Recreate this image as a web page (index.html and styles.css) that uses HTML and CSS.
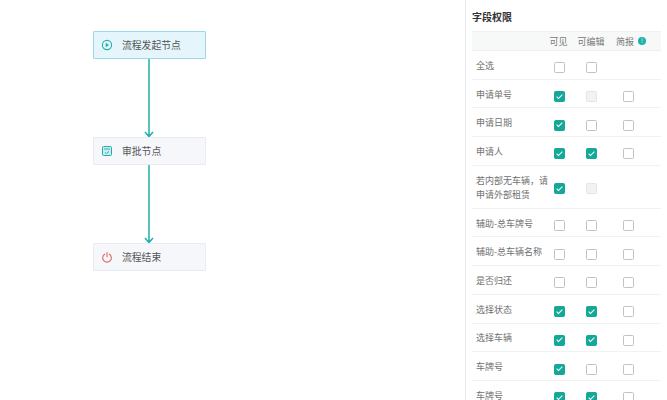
FILE: index.html
```html
<!DOCTYPE html>
<html>
<head>
    <meta charset="UTF-8">
    <title>字段权限</title>
    <link rel="stylesheet" href="styles.css">
</head>
<body>

    <div class="page">
        <div class="canvas">
            <svg class="links" width="465" height="400" viewBox="0 0 465 400">
                <path d="M149 59V136M145 132l4 4.500 4-4.500" />
                <path d="M149 165V242M145 238l4 4.500 4-4.500" />
            </svg>

            <div class="node node-start">
                <svg class="node-icon" width="12" height="12" viewBox="0 0 12 12">
                    <circle cx="6" cy="6" r="4.600" fill="none" stroke="#1fb0a8" stroke-width="1.100" />
                    <path d="M4.700 3.700L8 6L4.700 8.300Z" fill="#1fb0a8" />
                </svg>
                <span>流程发起节点</span>
            </div>

            <div class="node node-approve">
                <svg class="node-icon" width="12" height="12" viewBox="0 0 12 12">
                    <rect x="1.500" y="1.500" width="9" height="9" rx="1" fill="#c9ecec" stroke="#2aa9ad" stroke-width="1" />
                    <path d="M3 4H9M4 7.500L5.500 8.500L8 6.500" fill="none" stroke="#2aa9ad" stroke-width="0.900" />
                </svg>
                <span>审批节点</span>
            </div>

            <div class="node node-end">
                <svg class="node-icon" width="12" height="12" viewBox="0 0 12 12">
                    <path d="M3.700 3.200A4.300 4.300 0 1 0 8.300 3.200M6 1.500V5.800" fill="none" stroke="#dd6b66" stroke-width="1.100" stroke-linecap="round" />
                </svg>
                <span>流程结束</span>
            </div>
        </div>

        <div class="panel">
            <div class="panel-title">字段权限</div>

            <div class="grid-head">
                <span></span>
                <span class="head-cell head-first">可见</span>
                <span class="head-cell">可编辑</span>
                <span class="head-last">简报 <i class="info">!</i></span>
            </div>

            <div class="row">
                <span class="label">全选</span>
                <span class="cell"><i class="box"></i></span>
                <span class="cell"><i class="box"></i></span>
                <span class="cell"></span>
            </div>
            <div class="row">
                <span class="label">申请单号</span>
                <span class="cell"><i class="box on"></i></span>
                <span class="cell"><i class="box off"></i></span>
                <span class="cell"><i class="box"></i></span>
            </div>
            <div class="row">
                <span class="label">申请日期</span>
                <span class="cell"><i class="box on"></i></span>
                <span class="cell"><i class="box"></i></span>
                <span class="cell"><i class="box"></i></span>
            </div>
            <div class="row">
                <span class="label">申请人</span>
                <span class="cell"><i class="box on"></i></span>
                <span class="cell"><i class="box on"></i></span>
                <span class="cell"><i class="box"></i></span>
            </div>
            <div class="row row-tall">
                <span class="label">若内部无车辆&#65292;请申请外部租赁</span>
                <span class="cell"><i class="box on"></i></span>
                <span class="cell"><i class="box off"></i></span>
                <span class="cell"></span>
            </div>
            <div class="row">
                <span class="label">辅助-总车牌号</span>
                <span class="cell"><i class="box"></i></span>
                <span class="cell"><i class="box"></i></span>
                <span class="cell"><i class="box"></i></span>
            </div>
            <div class="row">
                <span class="label">辅助-总车辆名称</span>
                <span class="cell"><i class="box"></i></span>
                <span class="cell"><i class="box"></i></span>
                <span class="cell"><i class="box"></i></span>
            </div>
            <div class="row">
                <span class="label">是否归还</span>
                <span class="cell"><i class="box"></i></span>
                <span class="cell"><i class="box"></i></span>
                <span class="cell"><i class="box"></i></span>
            </div>
            <div class="row">
                <span class="label">选择状态</span>
                <span class="cell"><i class="box on"></i></span>
                <span class="cell"><i class="box on"></i></span>
                <span class="cell"><i class="box"></i></span>
            </div>
            <div class="row">
                <span class="label">选择车辆</span>
                <span class="cell"><i class="box on"></i></span>
                <span class="cell"><i class="box on"></i></span>
                <span class="cell"><i class="box"></i></span>
            </div>
            <div class="row">
                <span class="label">车牌号</span>
                <span class="cell"><i class="box on"></i></span>
                <span class="cell"><i class="box"></i></span>
                <span class="cell"><i class="box"></i></span>
            </div>
            <div class="row">
                <span class="label">车牌号</span>
                <span class="cell"><i class="box on"></i></span>
                <span class="cell"><i class="box on"></i></span>
                <span class="cell"><i class="box"></i></span>
            </div>
        </div>
    </div>

</body>
</html>
```

FILE: styles.css
```css
html, body {
    margin: 0;
    height: 400px;
    overflow: hidden;
    background-color: white;
    font-family: "Noto Sans CJK SC", "Liberation Sans", sans-serif;
    color: #666;
}

.page {
    display: flex;
    height: 400px;
}

/* diagram area, nodes sit on a free canvas */
.canvas {
    position: relative;
    width: 465px;
    flex-shrink: 0;
}

.links {
    position: absolute;
    left: 0;
    top: 0;
}

.links path {
    fill: none;
    stroke: #1fb0a8;
    stroke-width: 1.500;
}

.node {
    position: absolute;
    left: 93px;
    width: 113px;
    height: 28px;
    box-sizing: border-box;
    display: flex;
    align-items: center;
    gap: 9px;
    padding-left: 7px;
    border: 1px solid #e9ebf3;
    border-radius: 1px;
    background-color: #f6f7fb;
    font-size: 9.800px;
    color: #555;
}

.node span {
    margin-bottom: 1px;
}

.node-start {
    top: 31px;
    background-color: #e4f5fb;
    border-color: #9ed8ea;
}

.node-approve {
    top: 137px;
}

.node-end {
    top: 243px;
}

.panel {
    flex: 1;
    box-sizing: border-box;
    padding: 0 6px;
    border-left: 1px solid #ebebeb;
}

.panel-title {
    height: 31px;
    padding-top: 9px;
    box-sizing: border-box;
    font-size: 10px;
    line-height: 16px;
    font-weight: bold;
    color: #333;
}

.grid-head, .row {
    display: grid;
    grid-template-columns: 77px 21px 42px 32px 17px;
}

.grid-head {
    height: 20px;
    align-items: center;
    background-color: #f7f9f8;
    border-top: 1px solid #f0f2f1;
    border-bottom: 1px solid #eef0ef;
    box-sizing: border-box;
    font-size: 9px;
    color: #777;
}

.head-cell {
    text-align: center;
    white-space: nowrap;
}

.head-first {
    margin-right: 2px;
}

.head-last {
    grid-column: 4 / 6;
    padding-left: 4px;
    display: flex;
    align-items: center;
    gap: 4px;
}

.info {
    width: 8px;
    height: 8px;
    border-radius: 50%;
    background-color: #1fb0a8;
    color: white;
    font-size: 6px;
    font-style: normal;
    line-height: 8px;
    text-align: center;
}

.row {
    height: 28.700px;
    box-sizing: border-box;
    align-items: center;
    border-bottom: 1px solid #f1f2f2;
    font-size: 9px;
    line-height: 14px;
    color: #707070;
}

.row-tall {
    height: 43px;
}

.label {
    padding-left: 4px;
    margin-top: 2px;
}

.cell {
    display: flex;
    justify-content: center;
    padding-top: 6px;
}

.row-tall .cell {
    padding-top: 4px;
}

.box {
    width: 11px;
    height: 11px;
    box-sizing: border-box;
    border: 1px solid #bfc3c7;
    border-radius: 1.500px;
    background-color: white;
    position: relative;
}

.box.off {
    background-color: #f1f2f2;
    border-color: #e3e5e6;
}

.box.on {
    background-color: #14a899;
    border-color: #14a899;
}

.box.on::after {
    content: "";
    position: absolute;
    left: 3px;
    top: 0.500px;
    width: 3px;
    height: 6px;
    border: solid white;
    border-width: 0 1.500px 1.500px 0;
    transform: rotate(45deg);
    box-sizing: border-box;
}
```
